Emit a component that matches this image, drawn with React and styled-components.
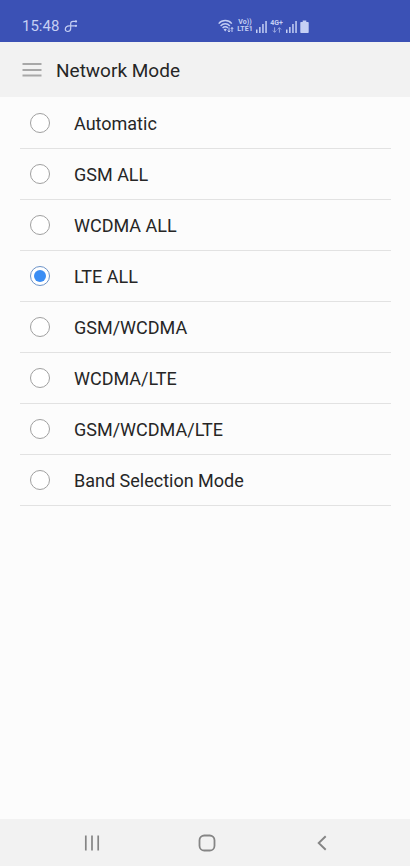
import React, { useState } from 'react';
import styled, { createGlobalStyle } from 'styled-components';

const theme = {
    primary: '#3b51b5',
    status: '#c5cff4',
    bar: '#f2f2f2',
    page: '#fcfcfc',
    text: '#262626',
    line: '#e2e2e2',
    ring: '#a0a0a0',
    accent: '#3a8df4',
    icon: '#858585'
};

const modes = [
    'Automatic',
    'GSM ALL',
    'WCDMA ALL',
    'LTE ALL',
    'GSM/WCDMA',
    'WCDMA/LTE',
    'GSM/WCDMA/LTE',
    'Band Selection Mode'
];

const GlobalStyle = createGlobalStyle`
    * {
        box-sizing: border-box;
    }

    body {
        margin: 0;
        background: ${theme.page};
        color: ${theme.text};
        font-family: Roboto, 'Liberation Sans', sans-serif;
    }
`;

const Screen = styled.div`
    display: flex;
    flex-direction: column;
    min-height: 100vh;
`;

const StatusBar = styled.div`
    display: flex;
    align-items: center;
    height: 42px;
    padding: 10px 101px 0 22px;
    background: ${theme.primary};
    color: ${theme.status};
`;

const Clock = styled.time`
    margin-right: 5px;
    font-size: 15px;
    line-height: 20px;
`;

const StatusIcons = styled.div`
    display: flex;
    align-items: center;
    gap: 3px;
    margin-left: auto;
`;

const NetworkLabel = styled.span`
    display: flex;
    flex-direction: column;
    align-items: center;
    width: ${props => props.$width};
    font-size: 7px;
    font-weight: 700;
    line-height: 7px;
    white-space: nowrap;
`;

const Header = styled.header`
    display: flex;
    align-items: center;
    gap: 14px;
    height: 55px;
    padding: 0 22px;
    background: ${theme.bar};
`;

const IconButton = styled.button`
    display: flex;
    align-items: center;
    justify-content: center;
    padding: 0;
    border: 0;
    background: none;
    color: ${theme.icon};
    cursor: pointer;
`;

const NavButton = styled(IconButton)`
    width: 115px;
    height: 47px;
`;

const Title = styled.h1`
    margin: 0;
    padding-top: 2px;
    font-size: 19px;
    font-weight: 400;
    line-height: 24px;
`;

const ModeList = styled.form`
    flex: 1;
    padding: 0 19px 0 20px;
`;

const ModeRow = styled.label`
    display: flex;
    align-items: center;
    gap: 24px;
    height: 51px;
    padding-left: 10px;
    border-bottom: 1px solid ${theme.line};
    cursor: pointer;

    &:first-child {
        height: 52px;
    }
`;

const ModeName = styled.span`
    padding-top: 2px;
    font-size: 18px;
    line-height: 24px;
`;

const Radio = styled.input`
    display: grid;
    place-content: center;
    appearance: none;
    width: 20px;
    height: 20px;
    margin: 0;
    border: 1px solid ${theme.ring};
    border-radius: 50%;
    background: white;

    &:checked {
        border-color: #6c93c8;
    }

    &:checked::before {
        content: '';
        width: 12px;
        height: 12px;
        border-radius: 50%;
        background: ${theme.accent};
    }
`;

const NavBar = styled.nav`
    display: flex;
    justify-content: center;
    padding-left: 4px;
    background: ${theme.bar};
`;

const NoteIcon = () => (
    <svg width="14" height="14" viewBox="0 0 14 14" fill="none" stroke="currentColor" strokeWidth="1.200">
        <path d="M12.300 2.400H9C7.400 2.400 6.700 3.200 6.700 4.800v4.500c0 2-1.100 3.200-2.900 3.200-1.500 0-2.500-.9-2.500-2.300C1.300 8 3 6.800 5.200 6.800h7" />
        <circle cx="12" cy="2.400" r="1.100" fill="currentColor" stroke="none" />
        <circle cx="12" cy="6.800" r="1.100" fill="currentColor" stroke="none" />
    </svg>
);

const WifiIcon = () => (
    <svg width="16" height="14" viewBox="0 0 16 14" fill="none" stroke="currentColor">
        <path d="M0.700 4.600C4.200 0.500 10.300 0.500 13.800 4.600M2.600 6.900c2.600-2.800 6.700-2.800 9.300 0M4.600 9c1.500-1.600 3.900-1.600 5.300 0" strokeWidth="1.400" />
        <path d="M5.600 10.400c.9-.9 2.300-.9 3.200 0l-1.600 2z" fill="currentColor" stroke="none" />
        <path d="M11 8.500v4.500M9.800 11.500L11 13l1.200-1.500M14 13V8.500M12.800 10L14 8.500l1.200 1.500" strokeWidth="1" />
    </svg>
);

const SignalIcon = () => (
    <svg width="11" height="13" viewBox="0 0 11 13" fill="currentColor">
        <path d="M0 9.500h1.500V13H0zM3.100 7h1.500v6H3.100zM6.200 4h1.500v9H6.200zM9.300 1h1.500v12H9.300z" />
    </svg>
);

const ArrowsIcon = () => (
    <svg width="10" height="6" viewBox="0 0 10 6" fill="none" stroke="currentColor" strokeWidth="1" opacity="0.7">
        <path d="M2.600 0.300v5M0.900 3.500l1.700 1.800 1.700-1.800M7.400 5.700v-5M5.700 2.500L7.400 0.700l1.700 1.800" />
    </svg>
);

const BatteryIcon = () => (
    <svg width="9" height="13" viewBox="0 0 9 13" fill="currentColor">
        <path d="M2.700 0.500h3.600V2H8q.7 0 .7.700v9.600q0 .7-.7.700H1q-.7 0-.7-.7V2.700Q.3 2 1 2h1.700z" />
    </svg>
);

const MenuIcon = () => (
    <svg width="20" height="14" viewBox="0 0 20 14" fill="none" stroke="#a8a8a8" strokeWidth="2">
        <path d="M0.500 1h19M0.500 7h19M0.500 12.500h19" />
    </svg>
);

const RecentsIcon = () => (
    <svg width="16" height="16" viewBox="0 0 16 16" fill="none" stroke="currentColor" strokeWidth="1.700">
        <path d="M1.800 0.500v15M8 0.500v15M14.200 0.500v15" />
    </svg>
);

const HomeIcon = () => (
    <svg width="18" height="18" viewBox="0 0 18 18" fill="none" stroke="currentColor" strokeWidth="1.800">
        <rect x="1.500" y="1.500" width="15" height="15" rx="4.800" />
    </svg>
);

const BackIcon = () => (
    <svg width="16" height="16" viewBox="0 0 16 16" fill="none" stroke="currentColor" strokeWidth="1.900">
        <path d="M11.700 1.200L4.700 8l7 6.800" />
    </svg>
);

const App = () => {
    const [selected, setSelected] = useState('LTE ALL');

    return (
        <Screen>
            <GlobalStyle />
            <StatusBar>
                <Clock>15:48</Clock>
                <NoteIcon />
                <StatusIcons>
                    <WifiIcon />
                    <NetworkLabel $width="16px">
                        <span>Vo))</span>
                        <span>LTE1</span>
                    </NetworkLabel>
                    <SignalIcon />
                    <NetworkLabel $width="13px">
                        <span>4G+</span>
                        <ArrowsIcon />
                    </NetworkLabel>
                    <SignalIcon />
                    <BatteryIcon />
                </StatusIcons>
            </StatusBar>
            <Header>
                <IconButton type="button" aria-label="Menu">
                    <MenuIcon />
                </IconButton>
                <Title>Network Mode</Title>
            </Header>
            <ModeList>
                {modes.map(mode => (
                    <ModeRow key={mode}>
                        <Radio
                            type="radio"
                            name="mode"
                            value={mode}
                            checked={selected === mode}
                            onChange={() => setSelected(mode)}
                        />
                        <ModeName>{mode}</ModeName>
                    </ModeRow>
                ))}
            </ModeList>
            <NavBar>
                <NavButton type="button" aria-label="Recent apps">
                    <RecentsIcon />
                </NavButton>
                <NavButton type="button" aria-label="Home">
                    <HomeIcon />
                </NavButton>
                <NavButton type="button" aria-label="Back">
                    <BackIcon />
                </NavButton>
            </NavBar>
        </Screen>
    );
};

export default App;
